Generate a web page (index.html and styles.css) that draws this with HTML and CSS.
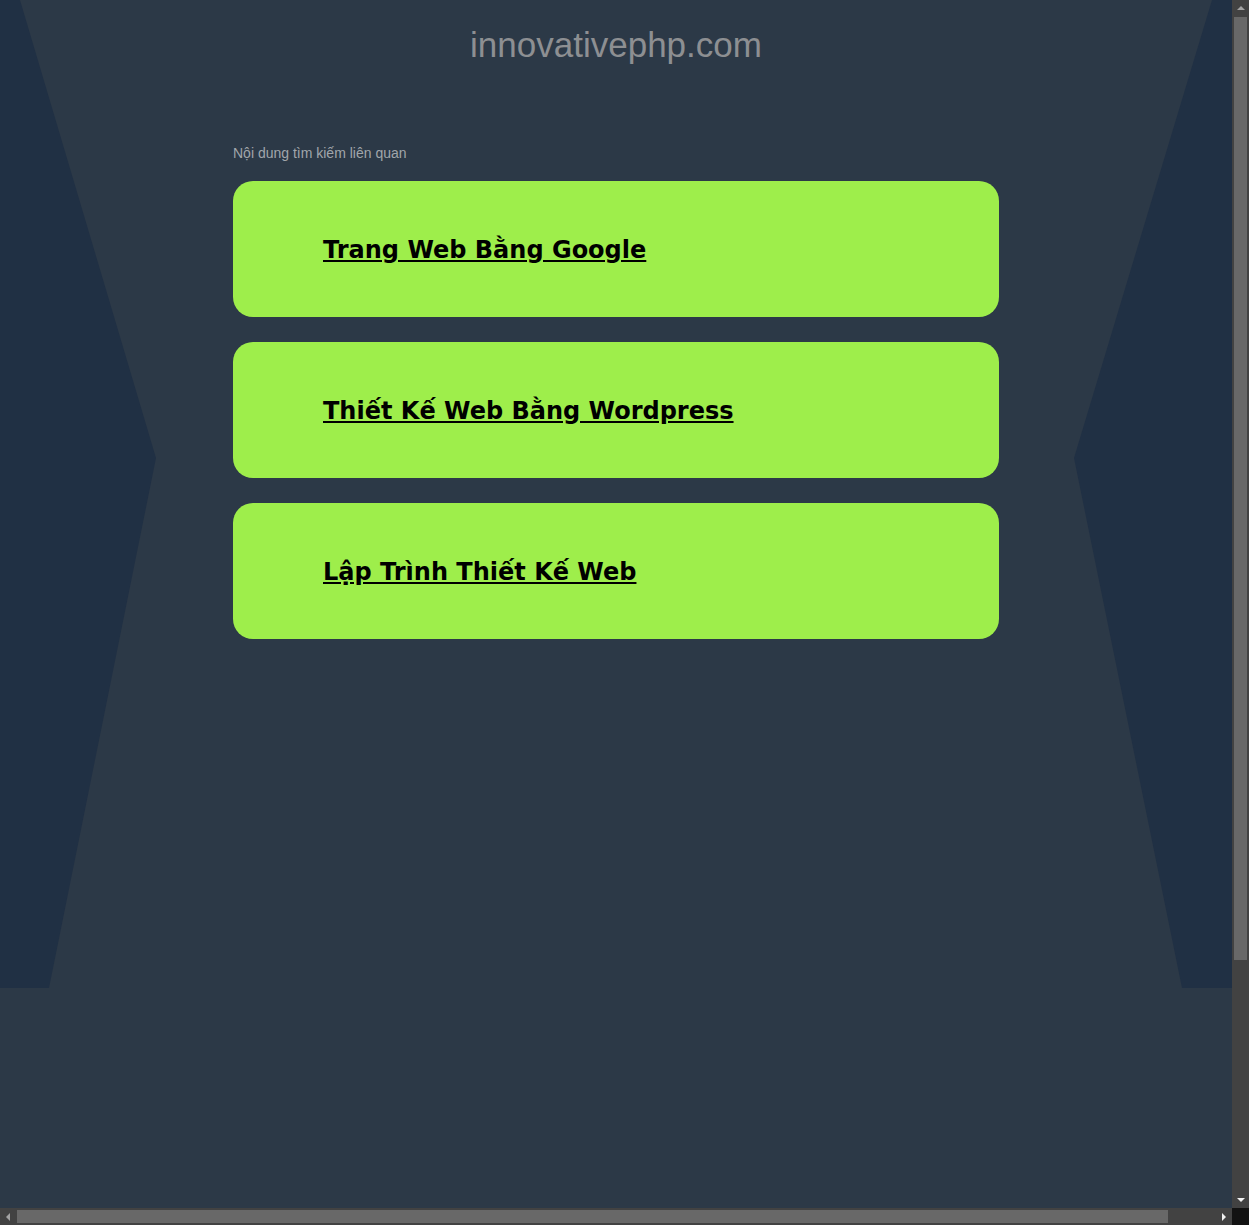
FILE: index.html
```html
<!DOCTYPE html>
<html lang="vi">
<head>
<meta charset="utf-8">
<title>innovativephp.com</title>
<link rel="stylesheet" href="styles.css">
</head>
<body>
<div class="page">
  <div class="stage">
    <header class="domain">innovativephp.com</header>
    <main class="related">
      <p class="related-label">Nội dung tìm kiếm liên quan</p>
      <ul class="cards">
        <li class="card"><a class="card-link" href="#">Trang Web Bằng Google</a></li>
        <li class="card"><a class="card-link" href="#">Thiết Kế Web Bằng Wordpress</a></li>
        <li class="card"><a class="card-link" href="#">Lập Trình Thiết Kế Web</a></li>
      </ul>
    </main>
  </div>
</div>
<div class="vscroll" aria-hidden="true">
  <span class="arrow arrow-up"></span>
  <span class="vthumb"></span>
  <span class="arrow arrow-down"></span>
</div>
<div class="hscroll" aria-hidden="true">
  <span class="arrow arrow-left"></span>
  <span class="hthumb"></span>
  <span class="arrow arrow-right"></span>
</div>
<div class="corner" aria-hidden="true"></div>
</body>
</html>
```
FILE: styles.css
```css
html, body {
  margin: 0;
  padding: 0;
}
body {
  background: #2c3947;
  font-family: "Liberation Sans", Arial, sans-serif;
  min-height: 1225px;
}
.page {
  width: 1232px;
}
.stage {
  position: relative;
  height: 988px;
  overflow: hidden;
}
.stage::before,
.stage::after {
  content: "";
  position: absolute;
  top: 0;
  height: 988px;
  background: #203044;
  z-index: 0;
}
.stage::before {
  left: 0;
  width: 156px;
  clip-path: polygon(0 0, 20px 0, 156px 458px, 49px 988px, 0 988px);
}
.stage::after {
  right: 0;
  width: 158px;
  clip-path: polygon(138px 0, 158px 0, 158px 988px, 108px 988px, 0 458px);
}
.domain {
  position: relative;
  z-index: 1;
  padding-top: 25px;
  font-size: 35px;
  line-height: 40px;
  color: #8d8f92;
  text-align: center;
}
.related {
  position: relative;
  z-index: 1;
  width: 766px;
  margin: 80px auto 0;
}
.related-label {
  margin: 0 0 20px;
  font-size: 14px;
  line-height: 16px;
  color: #a1a6ab;
}
.cards {
  list-style: none;
  margin: 0;
  padding: 0;
  display: flex;
  flex-direction: column;
  gap: 25px;
}
.card {
  box-sizing: border-box;
  height: 136px;
  display: flex;
  align-items: center;
  padding: 2px 0 0 90px;
  background: #9eee4b;
  border-radius: 20px;
}
.card-link {
  font-family: "DejaVu Sans", Verdana, sans-serif;
  font-weight: bold;
  font-size: 24px;
  color: #000;
  text-decoration: underline;
}

/* browser scrollbars */
.vscroll {
  position: fixed;
  top: 0;
  right: 0;
  width: 17px;
  height: 1208px;
  background: #424242;
}
.vthumb {
  position: absolute;
  top: 17px;
  left: 2px;
  width: 13px;
  height: 943px;
  background: #686868;
}
.hscroll {
  position: fixed;
  left: 0;
  bottom: 0;
  width: 1232px;
  height: 17px;
  background: #424242;
}
.hthumb {
  position: absolute;
  left: 17px;
  top: 2px;
  width: 1151px;
  height: 13px;
  background: #686868;
}
.corner {
  position: fixed;
  right: 0;
  bottom: 0;
  width: 17px;
  height: 17px;
  background: #121212;
}
.arrow {
  position: absolute;
  width: 0;
  height: 0;
}
.arrow-up {
  top: 6px;
  left: 5px;
  border-left: 4px solid transparent;
  border-right: 4px solid transparent;
  border-bottom: 4px solid #a3a3a3;
}
.arrow-down {
  bottom: 6px;
  left: 5px;
  border-left: 4px solid transparent;
  border-right: 4px solid transparent;
  border-top: 4px solid #f0f0f0;
}
.arrow-left {
  left: 6px;
  top: 5px;
  border-top: 4px solid transparent;
  border-bottom: 4px solid transparent;
  border-right: 4px solid #a3a3a3;
}
.arrow-right {
  right: 6px;
  top: 5px;
  border-top: 4px solid transparent;
  border-bottom: 4px solid transparent;
  border-left: 4px solid #f0f0f0;
}
```
